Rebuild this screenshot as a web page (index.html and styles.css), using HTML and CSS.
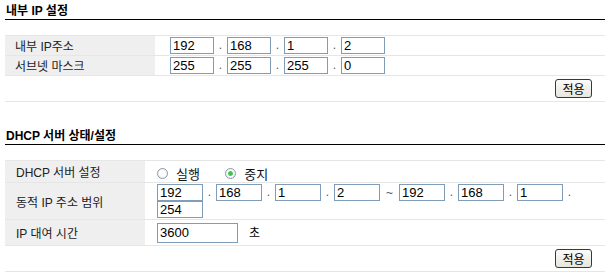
FILE: index.html
```html
<!DOCTYPE html>
<html lang="ko">
<head>
    <meta charset="UTF-8">
    <title>내부 IP 설정</title>
    <link rel="stylesheet" href="styles.css">
</head>
<body>
    <div class="page">
        <!-- 내부 IP 설정 -->
        <h3 class="sect-title">내부 IP 설정</h3>
        <table class="form-table lan-table">
            <tr>
                <td class="label">내부 IP주소</td>
                <td class="field">
                    <div class="ip-row">
                        <input class="ip" type="text" value="192"><span class="dot">.</span>
                        <input class="ip" type="text" value="168"><span class="dot">.</span>
                        <input class="ip" type="text" value="1"><span class="dot">.</span>
                        <input class="ip" type="text" value="2">
                    </div>
                </td>
            </tr>
            <tr>
                <td class="label">서브넷 마스크</td>
                <td class="field">
                    <div class="ip-row">
                        <input class="ip" type="text" value="255"><span class="dot">.</span>
                        <input class="ip" type="text" value="255"><span class="dot">.</span>
                        <input class="ip" type="text" value="255"><span class="dot">.</span>
                        <input class="ip" type="text" value="0">
                    </div>
                </td>
            </tr>
            <tr class="btn-row">
                <td colspan="2"><button class="btn" type="button">적용</button></td>
            </tr>
        </table>

        <!-- DHCP 서버 상태/설정 -->
        <h3 class="sect-title sect-second">DHCP 서버 상태/설정</h3>
        <table class="form-table dhcp-table">
            <tr class="row-radio">
                <td class="label">DHCP 서버 설정</td>
                <td class="field">
                    <label class="opt"><input type="radio" name="dhcp"><span>실행</span></label>
                    <label class="opt"><input type="radio" name="dhcp" checked><span>중지</span></label>
                </td>
            </tr>
            <tr class="row-range">
                <td class="label">동적 IP 주소 범위</td>
                <td class="field">
                    <div class="ip-row wide">
                        <input class="ip" type="text" value="192"><span class="dot">.</span>
                        <input class="ip" type="text" value="168"><span class="dot">.</span>
                        <input class="ip" type="text" value="1"><span class="dot">.</span>
                        <input class="ip" type="text" value="2"><span class="tilde">~</span>
                        <input class="ip" type="text" value="192"><span class="dot">.</span>
                        <input class="ip" type="text" value="168"><span class="dot">.</span>
                        <input class="ip" type="text" value="1"><span class="dot">.</span>
                        <input class="ip" type="text" value="254">
                    </div>
                </td>
            </tr>
            <tr class="row-lease">
                <td class="label">IP 대여 시간</td>
                <td class="field">
                    <input class="lease" type="text" value="3600"><span class="unit">초</span>
                </td>
            </tr>
            <tr class="btn-row">
                <td colspan="2"><button class="btn" type="button">적용</button></td>
            </tr>
        </table>
    </div>
</body>
</html>
```

FILE: styles.css
```css
*{
    margin: 0;
    padding: 0;
    box-sizing: border-box;
}
body{
    background-color: #fff;
    color: #222;
    font: 12px "Liberation Sans", "Noto Sans CJK KR", sans-serif;
}
.page{
    padding: 0 9px 0 5px;
}

/* 제목 */
.sect-title{
    padding: 4px 0 0 1px;
    height: 20px;
    line-height: 15px;
    font-size: 12px;
    font-weight: bold;
    color: #000;
    border-bottom: 1px solid #000;
}
.sect-second{
    margin-top: 23px;
}

/* 폼 테이블 */
.form-table{
    width: 100%;
    margin-top: 15px;
    border-collapse: collapse;
}
.form-table td{
    border-top: 1px solid #e6e6e6;
    vertical-align: middle;
    padding-top: 0;
    padding-bottom: 0;
}
.form-table tr:last-child td{
    border-bottom: 1px solid #e6e6e6;
}
.form-table .label{
    background-color: #efefef;
    padding-left: 10px;
    white-space: nowrap;
}
.lan-table .label{
    width: 150px;
}
.lan-table td{
    height: 20px;
}
.lan-table .field{
    padding-left: 15px;
}
.dhcp-table .label{
    width: 140px;
    padding-left: 11px;
}
.dhcp-table .field{
    padding-left: 12px;
}
.row-radio td{
    height: 22px;
}
.row-range td{
    height: 37px;
}
.row-lease td{
    height: 26px;
}
.form-table .btn-row td{
    height: 26px;
    text-align: right;
    padding-right: 13px;
}

/* IP 입력 */
.ip-row{
    display: flex;
    flex-wrap: wrap;
    align-items: center;
}
.ip, .lease{
    width: 44px;
    height: 17px;
    border: 1px solid #7f9db9;
    padding: 0 2px;
    font: 13px/15px "Liberation Sans", sans-serif;
    color: #000;
    outline: none;
}
.wide .ip{
    width: 46px;
}
.dot{
    width: 13px;
    text-align: center;
    color: #555;
    line-height: 15px;
}
.tilde{
    width: 19px;
    text-align: center;
    color: #555;
}
.lease{
    width: 81px;
    height: 20px;
}
.unit{
    margin-left: 11px;
    color: #000;
}

/* 라디오 */
.opt{
    display: inline-flex;
    align-items: center;
    margin-right: 22px;
    position: relative;
    top: 2px;
}
.opt input{
    appearance: none;
    -webkit-appearance: none;
    width: 11px;
    height: 11px;
    border: 1px solid #8d9aab;
    border-radius: 50%;
    background: radial-gradient(circle, #fff 40%, #e2e6ea 100%);
    margin-right: 8px;
}
.opt input:checked{
    background: radial-gradient(circle, #2fbd3b 0, #4ccc55 2px, #fff 3px, #e2e6ea 100%);
}
.opt span{
    font-size: 13px;
    color: #111;
}

/* 버튼 */
.btn{
    width: 37px;
    height: 19px;
    border: 1px solid #2c3b4c;
    border-radius: 3px;
    background: linear-gradient(#fbfbf8, #e6e5de);
    font: 12px "Noto Sans CJK KR", sans-serif;
    color: #000;
    line-height: 15px;
}
```
